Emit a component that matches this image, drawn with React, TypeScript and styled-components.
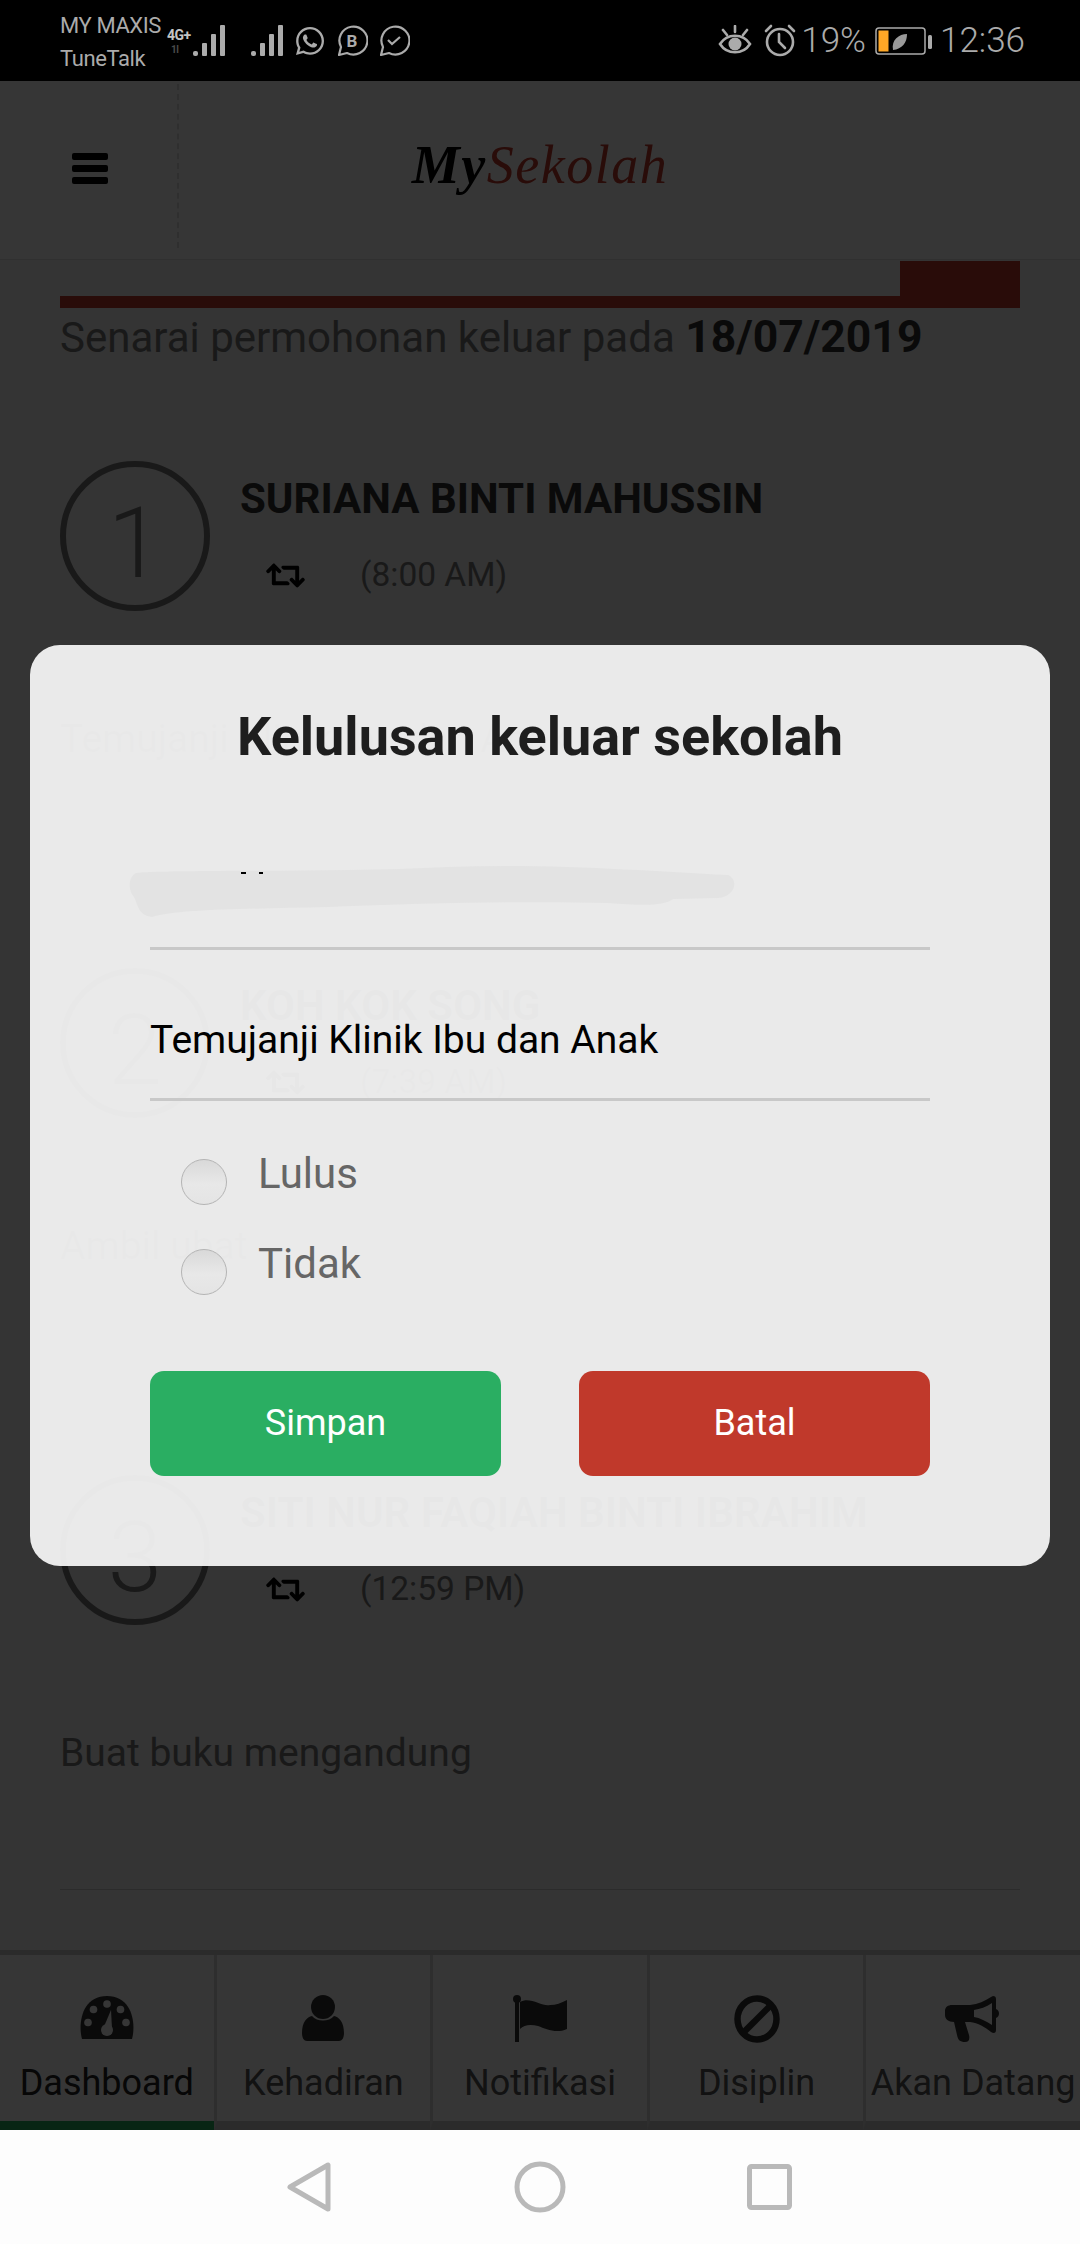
import styled, { createGlobalStyle } from "styled-components";
import { FaRetweet, FaWhatsapp } from "react-icons/fa";

const GlobalStyle = createGlobalStyle`
  html, body {
    margin: 0;
    padding: 0;
    background: #000;
  }
  * {
    box-sizing: border-box;
  }
`;

const Page = styled.div`
  width: 1080px;
  height: 2244px;
  display: flex;
  flex-direction: column;
  overflow: hidden;
  font-family: Roboto, "Liberation Sans", sans-serif;
`;

const StatusBar = styled.div`
  height: 81px;
  flex: none;
  background: #000;
  color: #ababab;
  display: flex;
  align-items: center;
  justify-content: space-between;
  padding: 0 55px 0 60px;
`;

const StatusGroup = styled.div<{ $gap?: number }>`
  display: flex;
  align-items: center;
  gap: ${(props) => props.$gap ?? 0}px;
`;

const Carriers = styled.div`
  font-size: 22px;
  line-height: 33px;
  letter-spacing: -0.4px;
  width: 107px;
  margin-top: 2px;
`;

const NetworkType = styled.div`
  width: 26px;
  height: 32px;
  font-size: 14px;
  line-height: 14px;
  font-weight: 700;
  letter-spacing: -0.5px;
  white-space: nowrap;
  padding-top: 3px;
  color: #c4c4c4;
`;

const SimTwoMark = styled.div`
  font-size: 10px;
  line-height: 10px;
  margin: 3px 0 0 4px;
  color: #4a4a4a;
`;

const SimGroup = styled.div`
  display: flex;
  align-items: flex-end;
  margin-right: 25px;
`;

const BubbleRow = styled.div`
  display: flex;
  align-items: center;
  gap: 10px;
  margin-left: 10px;
`;

const Percent = styled.span`
  font-size: 35px;
  font-weight: 300;
  margin: 0 9px 0 5px;
`;

const Clock = styled.span`
  font-size: 35px;
  font-weight: 300;
  margin-left: 7px;
`;

const Screen = styled.div`
  flex: 1;
  min-height: 0;
  position: relative;
  display: flex;
  flex-direction: column;
  background: #f3f3f3;
`;

const AppBar = styled.header`
  height: 179px;
  flex: none;
  background: #fff;
  border-bottom: 1px solid #e4e4e4;
  display: flex;
  align-items: flex-start;
`;

const MenuCell = styled.div`
  width: 179px;
  height: 164px;
  margin-top: 3px;
  border-right: 2px dashed #ddd;
  display: flex;
  flex-direction: column;
  gap: 5px;
  padding: 69px 0 0 72px;
`;

const MenuBar = styled.span`
  width: 36px;
  height: 7px;
  border-radius: 2px;
  background: #000;
`;

const Logo = styled.div`
  width: 722px;
  text-align: center;
  font-family: "Liberation Serif", serif;
  font-style: italic;
  font-size: 54px;
  line-height: 60px;
  letter-spacing: 1.5px;
  margin-top: 54px;
  color: #c0392b;
`;

const LogoStrong = styled.span`
  color: #000;
  font-weight: 700;
`;

const Content = styled.main`
  flex: 1;
  min-height: 0;
  overflow: hidden;
  padding: 1px 60px 0;
`;

const RedRule = styled.div`
  height: 47px;
  border-bottom: 12px solid #c0392b;
  display: flex;
  justify-content: flex-end;
`;

const RedTab = styled.div`
  width: 120px;
  height: 35px;
  background: #c0392b;
`;

const Heading = styled.h2`
  margin: 5px 0 7px;
  font-size: 42px;
  line-height: 48px;
  font-weight: 400;
  color: #777;
  white-space: nowrap;
`;

const HeadingDate = styled.b`
  font-size: 44.5px;
  font-weight: 700;
  color: #333;
`;

const Item = styled.section`
  height: 507px;
  padding-top: 92px;
  border-bottom: 1px solid #ccc;
`;

const ItemRow = styled.div`
  display: flex;
  gap: 30px;
`;

const NumberCircle = styled.div`
  width: 150px;
  height: 150px;
  flex: none;
  border: 6px solid #777;
  border-radius: 50%;
  color: #777;
  font-size: 98px;
  font-weight: 300;
  padding-top: 14px;
  display: flex;
  align-items: center;
  justify-content: center;
`;

const Name = styled.div`
  font-size: 42px;
  line-height: 48px;
  font-weight: 700;
  color: #333;
  margin-top: 14px;
  white-space: nowrap;
`;

const Meta = styled.div`
  display: flex;
  align-items: center;
  gap: 55px;
  padding-left: 26px;
  margin-top: 32px;
  color: #000;
`;

const Time = styled.span`
  font-size: 33.5px;
  line-height: 40px;
  color: #777;
`;

const Reason = styled.p`
  margin: 105px 0 0;
  font-size: 39px;
  line-height: 46px;
  color: #777;
`;

const TabBar = styled.nav`
  height: 180px;
  flex: none;
  background: #fff;
  border-top: 5px solid #ccc;
  display: flex;
`;

const TabItem = styled.div<{ $active?: boolean }>`
  flex: 1;
  min-width: 0;
  border-left: 3px solid #d8d8d8;
  border-bottom: 9px solid ${(props) => (props.$active ? "#27ae60" : "#ccc")};
  display: flex;
  flex-direction: column;
  align-items: center;
  &:first-child {
    border-left: 0;
  }
`;

const TabIcon = styled.div`
  height: 48px;
  margin-top: 40px;
  display: flex;
  color: #333;
`;

const TabLabel = styled.span<{ $active?: boolean }>`
  font-size: 36px;
  line-height: 42px;
  margin-top: 19px;
  white-space: nowrap;
  color: ${(props) => (props.$active ? "#222" : "#555")};
`;

const Overlay = styled.div`
  position: absolute;
  inset: 0;
  background: rgba(0, 0, 0, 0.79);
  display: flex;
  align-items: center;
  justify-content: center;
`;

const Modal = styled.div`
  width: 1020px;
  height: 921px;
  background: rgba(249, 249, 249, 0.93);
  border-radius: 30px;
  padding: 61px 120px 0;
`;

const ModalTitle = styled.h1`
  margin: 0 0 79px;
  text-align: center;
  font-size: 54px;
  line-height: 62px;
  font-weight: 700;
  color: #1e1e1e;
  white-space: nowrap;
`;

const Field = styled.div`
  position: relative;
  height: 103px;
  padding-top: 19px;
  border-bottom: 3px solid #c8c8c8;
  font-size: 39px;
  line-height: 46px;
  color: #000;
  & + & {
    margin-top: 48px;
  }
`;

const Blob = styled.svg`
  position: absolute;
  left: -22px;
  top: 18px;
`;

const RadioGroup = styled.div`
  margin: 58px 0 76px 31px;
  display: flex;
  flex-direction: column;
  gap: 44px;
`;

const RadioRow = styled.label`
  display: flex;
  gap: 31px;
  height: 46px;
`;

const RadioInput = styled.input`
  appearance: none;
  width: 46px;
  height: 46px;
  margin: 0;
  flex: none;
  border-radius: 50%;
  border: 1px solid #b4b4b4;
  background: linear-gradient(#d9d9d9, #e8e8e8 55%, #e4e4e4);
`;

const RadioLabel = styled.span`
  font-size: 42px;
  line-height: 46px;
  margin-top: -8px;
  color: #666;
`;

const Buttons = styled.div`
  display: flex;
  justify-content: space-between;
`;

const ActionButton = styled.button<{ $color: string }>`
  width: 351px;
  height: 105px;
  border: 0;
  border-radius: 14px;
  padding-bottom: 3px;
  background: ${(props) => props.$color};
  color: #fff;
  font-family: inherit;
  font-size: 36px;
`;

const NavBar = styled.div`
  height: 114px;
  flex: none;
  background: #fdfdfd;
`;

const NavIcons = styled.svg`
  display: block;
`;

function Signal() {
  return (
    <svg width="33" height="32" viewBox="0 0 33 32" fill="currentColor">
      <rect x="0" y="26" width="5" height="5" rx="2" />
      <rect x="9" y="18" width="5" height="13" rx="1" />
      <rect x="18" y="9" width="5" height="22" rx="1" />
      <rect x="27" y="0" width="5" height="31" rx="1" />
    </svg>
  );
}

function BubbleIcon({ children }: { children: React.ReactNode }) {
  return (
    <svg width="32" height="32" viewBox="0 0 32 32" fill="none" stroke="currentColor" strokeWidth="2.2">
      <path d="M3 30 L5 22 A14 14 0 1 1 11 28 Z" strokeLinejoin="round" />
      {children}
    </svg>
  );
}

function EyeIcon() {
  return (
    <svg width="34" height="31" viewBox="0 0 34 31" fill="none" stroke="currentColor" strokeWidth="2.6" strokeLinecap="round">
      <path d="M2 19 C9 8 25 8 32 19 C25 30 9 30 2 19 Z" />
      <circle cx="17" cy="19" r="6.5" fill="currentColor" stroke="none" />
      <path d="M5 5 L9 10 M17 1 L17 7 M29 5 L25 10" />
    </svg>
  );
}

function AlarmIcon() {
  return (
    <svg width="32" height="33" viewBox="0 0 32 33" fill="none" stroke="currentColor" strokeWidth="2.6" strokeLinecap="round">
      <circle cx="16" cy="18" r="13" />
      <path d="M15 10 L15 18 L21 24 M2 7 L7 2 M30 7 L25 2" />
    </svg>
  );
}

function BatteryIcon() {
  return (
    <svg width="58" height="28" viewBox="0 0 58 28">
      <rect x="1" y="1" width="49" height="26" rx="3" fill="none" stroke="#ababab" strokeWidth="1.5" />
      <rect x="3.5" y="3.5" width="10" height="21" fill="#ffa726" />
      <path d="M18 23 C16 13 24 7 32 7 C32 16 27 22 18 23 Z" fill="#9a9a9a" />
      <rect x="53" y="8" width="4" height="14" rx="1.5" fill="#ababab" />
    </svg>
  );
}

function GaugeIcon() {
  return (
    <svg width="54" height="46" viewBox="0 0 54 46">
      <path d="M2 44 C-2 30 1 1 27 1 C53 1 56 30 52 44 Z" fill="currentColor" />
      <g fill="#fff">
        <circle cx="27" cy="9" r="3.8" />
        <circle cx="13.5" cy="14.5" r="3.8" />
        <circle cx="40.5" cy="14.5" r="3.8" />
        <circle cx="8" cy="27.5" r="3.8" />
        <circle cx="46" cy="27.5" r="3.8" />
        <circle cx="27" cy="35" r="6" />
        <path d="M23 34 L31 15 L32 34 Z" />
      </g>
    </svg>
  );
}

function PersonIcon() {
  return (
    <svg width="44" height="47" viewBox="0 0 44 47" fill="currentColor">
      <circle cx="22" cy="12" r="12" />
      <path d="M1 38 C1 27 6 22 11 21 C16 27 28 27 33 21 C38 22 43 27 43 38 C43 43 41 46 38 46 L6 46 C3 46 1 43 1 38 Z" />
    </svg>
  );
}

function FlagIcon() {
  return (
    <svg width="56" height="48" viewBox="0 0 56 48" fill="currentColor">
      <circle cx="5" cy="4" r="4" />
      <rect x="3" y="5" width="4" height="42" />
      <path d="M8 7 C18 1 30 12 38 10 C44 10 49 8 55 5 L55 34 C44 39 34 34 26 31 C18 29 12 30 8 34 Z" />
    </svg>
  );
}

function BanIcon() {
  return (
    <svg width="46" height="48" viewBox="0 0 46 48" fill="none" stroke="currentColor" strokeWidth="6.5">
      <ellipse cx="23" cy="24" rx="19.5" ry="20.5" />
      <path d="M9 38 L37 10" />
    </svg>
  );
}

function MegaphoneIcon() {
  return (
    <svg width="56" height="48" viewBox="0 0 56 48" fill="currentColor">
      <path d="M48 1 C50 1 51 2 51 4 L51 14 C55 15 55 22 51 23 L51 35 C51 38 49 39 46 37 C40 32 33 28 25 27 L20 27 L24 40 C25 44 24 47 20 47 C15 47 13 45 12 40 L9 27 C3 27 0 24 0 20 L0 16 C0 12 3 10 7 10 L25 10 C33 9 40 6 46 2 Z M47 8 C41 12 35 14 29 15 L29 22 C35 23 41 26 47 30 Z" fillRule="evenodd" />
    </svg>
  );
}

const items = [
  { no: 1, name: "SURIANA BINTI MAHUSSIN", time: "(8:00 AM)", reason: "Temujanji Klinik Ibu dan Anak" },
  { no: 2, name: "KOH KOK SONG", time: "(7:39 AM)", reason: "Ambil ubat" },
  { no: 3, name: "SITI NUR FAQIAH BINTI IBRAHIM", time: "(12:59 PM)", reason: "Buat buku mengandung" },
];

const tabs = [
  { label: "Dashboard", icon: <GaugeIcon />, active: true },
  { label: "Kehadiran", icon: <PersonIcon /> },
  { label: "Notifikasi", icon: <FlagIcon /> },
  { label: "Disiplin", icon: <BanIcon /> },
  { label: "Akan Datang", icon: <MegaphoneIcon /> },
];

function App() {
  return (
    <Page>
      <GlobalStyle />
      <StatusBar>
        <StatusGroup>
          <Carriers>
            MY MAXIS
            <br />
            TuneTalk
          </Carriers>
          <NetworkType>
            4G+
            <SimTwoMark>1l</SimTwoMark>
          </NetworkType>
          <SimGroup>
            <Signal />
          </SimGroup>
          <Signal />
          <BubbleRow>
            <FaWhatsapp size={32} />
            <BubbleIcon>
              <text x="16" y="21.5" fontSize="17" fontWeight="700" textAnchor="middle" fill="currentColor" stroke="none">
                B
              </text>
            </BubbleIcon>
            <BubbleIcon>
              <path d="M10 15 L14 19 L22 12" />
            </BubbleIcon>
          </BubbleRow>
        </StatusGroup>
        <StatusGroup>
          <StatusGroup $gap={12}>
            <EyeIcon />
            <AlarmIcon />
          </StatusGroup>
          <Percent>19%</Percent>
          <BatteryIcon />
          <Clock>12:36</Clock>
        </StatusGroup>
      </StatusBar>

      <Screen>
        <AppBar>
          <MenuCell>
            <MenuBar />
            <MenuBar />
            <MenuBar />
          </MenuCell>
          <Logo>
            <LogoStrong>My</LogoStrong>Sekolah
          </Logo>
        </AppBar>
        <Content>
          <RedRule>
            <RedTab />
          </RedRule>
          <Heading>
            Senarai permohonan keluar pada <HeadingDate>18/07/2019</HeadingDate>
          </Heading>
          {items.map((item) => (
            <Item key={item.no}>
              <ItemRow>
                <NumberCircle>{item.no}</NumberCircle>
                <div>
                  <Name>{item.name}</Name>
                  <Meta>
                    <FaRetweet size={39} />
                    <Time>{item.time}</Time>
                  </Meta>
                </div>
              </ItemRow>
              <Reason>{item.reason}</Reason>
            </Item>
          ))}
        </Content>
        <TabBar>
          {tabs.map((tab) => (
            <TabItem key={tab.label} $active={tab.active}>
              <TabIcon>{tab.icon}</TabIcon>
              <TabLabel $active={tab.active}>{tab.label}</TabLabel>
            </TabItem>
          ))}
        </TabBar>

        <Overlay>
          <Modal>
            <ModalTitle>Kelulusan keluar sekolah</ModalTitle>
            <Field>
              <Blob width="610" height="60" viewBox="0 0 610 60">
                <path
                  d="M8 8 C60 4 200 8 320 2 C420 -2 520 6 600 10 C612 16 606 32 590 33 L545 34 C535 42 510 40 480 38 C400 36 300 38 200 42 C120 44 50 44 24 52 C10 50 10 40 6 32 C0 26 0 12 8 8 Z"
                  fill="#e3e3e3"
                />
                <path d="M113 8 l5 0 M131 8 l4 0" stroke="#000" strokeWidth="2" />
              </Blob>
            </Field>
            <Field>Temujanji Klinik Ibu dan Anak</Field>
            <RadioGroup>
              <RadioRow>
                <RadioInput type="radio" name="status" />
                <RadioLabel>Lulus</RadioLabel>
              </RadioRow>
              <RadioRow>
                <RadioInput type="radio" name="status" />
                <RadioLabel>Tidak</RadioLabel>
              </RadioRow>
            </RadioGroup>
            <Buttons>
              <ActionButton $color="#2aae62">Simpan</ActionButton>
              <ActionButton $color="#c0392b">Batal</ActionButton>
            </Buttons>
          </Modal>
        </Overlay>
      </Screen>

      <NavBar>
        <NavIcons width="1080" height="114" viewBox="0 0 1080 114" fill="none" stroke="#b9b9b9" strokeWidth="5" strokeLinejoin="round">
          <path d="M290 57 L328 35 L328 79 Z" />
          <circle cx="540" cy="57" r="23" />
          <rect x="749.5" y="36.5" width="40" height="41" rx="2" />
        </NavIcons>
      </NavBar>
    </Page>
  );
}

export default App;
